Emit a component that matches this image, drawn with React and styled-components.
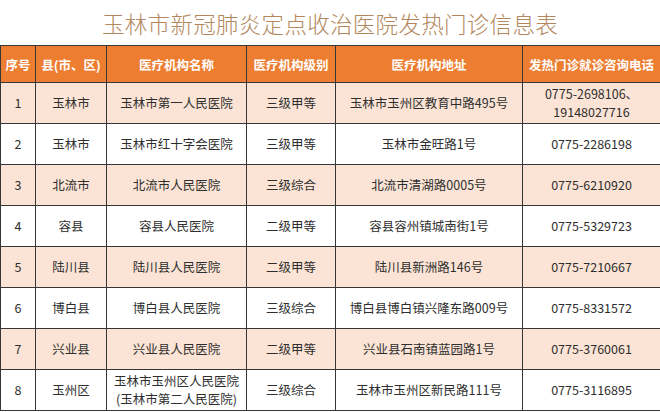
import styled, { createGlobalStyle } from 'styled-components';

const GlobalStyle = createGlobalStyle`
    html, body {
        margin: 0;
        padding: 0;
        background: #ffffff;
    }
    body {
        font-family: "Noto Sans CJK SC", "Noto Sans", sans-serif;
    }
`;

const Page = styled.div`
    width: 660px;
    height: 412px;
    overflow: hidden;
    background: #ffffff;
`;

const Title = styled.h1`
    margin: 0;
    height: 45px;
    display: flex;
    align-items: center;
    justify-content: center;
    font-size: 22.5px;
    font-weight: 300;
    letter-spacing: 0.3px;
    color: #b3875d;
    padding-top: 1px;
    box-sizing: border-box;
`;

const Table = styled.table`
    width: 660px;
    table-layout: fixed;
    border-collapse: collapse;
    font-size: 12.5px;
    color: #2e2e2e;
`;

const HeaderCell = styled.th`
    height: 36px;
    padding: 0;
    background: #ed7d31;
    color: #ffffff;
    font-weight: 700;
    text-align: center;
    white-space: nowrap;
    border: 1px solid #363636;
`;

const Row = styled.tr`
    background: ${(p) => (p.$tinted ? '#fbe4d5' : '#ffffff')};
`;

const Cell = styled.td`
    height: 40px;
    padding: 0;
    text-align: center;
    vertical-align: middle;
    line-height: 18px;
    white-space: nowrap;
    border: 1px solid #363636;
`;

const columns = [
    { title: '序号', width: 35 },
    { title: '县(市、区)', width: 71 },
    { title: '医疗机构名称', width: 140 },
    { title: '医疗机构级别', width: 89 },
    { title: '医疗机构地址', width: 187 },
    { title: '发热门诊就诊咨询电话', width: 138 },
];

const rows = [
    ['1', '玉林市', ['玉林市第一人民医院'], '三级甲等', '玉林市玉州区教育中路495号', ['0775-2698106、', '19148027716']],
    ['2', '玉林市', ['玉林市红十字会医院'], '三级甲等', '玉林市金旺路1号', ['0775-2286198']],
    ['3', '北流市', ['北流市人民医院'], '三级综合', '北流市清湖路0005号', ['0775-6210920']],
    ['4', '容县', ['容县人民医院'], '二级甲等', '容县容州镇城南街1号', ['0775-5329723']],
    ['5', '陆川县', ['陆川县人民医院'], '二级甲等', '陆川县新洲路146号', ['0775-7210667']],
    ['6', '博白县', ['博白县人民医院'], '三级综合', '博白县博白镇兴隆东路009号', ['0775-8331572']],
    ['7', '兴业县', ['兴业县人民医院'], '二级甲等', '兴业县石南镇蓝园路1号', ['0775-3760061']],
    ['8', '玉州区', ['玉林市玉州区人民医院', '(玉林市第二人民医院)'], '三级综合', '玉林市玉州区新民路111号', ['0775-3116895']],
];

const Lines = ({ items }) =>
    items.map((line, i) => (
        <div key={i}>{line}</div>
    ));

export default function App() {
    return (
        <Page>
            <GlobalStyle />
            <Title>玉林市新冠肺炎定点收治医院发热门诊信息表</Title>
            <Table>
                <colgroup>
                    {columns.map((c) => (
                        <col key={c.title} style={{ width: c.width }} />
                    ))}
                </colgroup>
                <thead>
                    <tr>
                        {columns.map((c) => (
                            <HeaderCell key={c.title}>{c.title}</HeaderCell>
                        ))}
                    </tr>
                </thead>
                <tbody>
                    {rows.map((r, i) => (
                        <Row key={r[0]} $tinted={i % 2 === 0}>
                            <Cell>{r[0]}</Cell>
                            <Cell>{r[1]}</Cell>
                            <Cell><Lines items={r[2]} /></Cell>
                            <Cell>{r[3]}</Cell>
                            <Cell>{r[4]}</Cell>
                            <Cell><Lines items={r[5]} /></Cell>
                        </Row>
                    ))}
                </tbody>
            </Table>
        </Page>
    );
}
